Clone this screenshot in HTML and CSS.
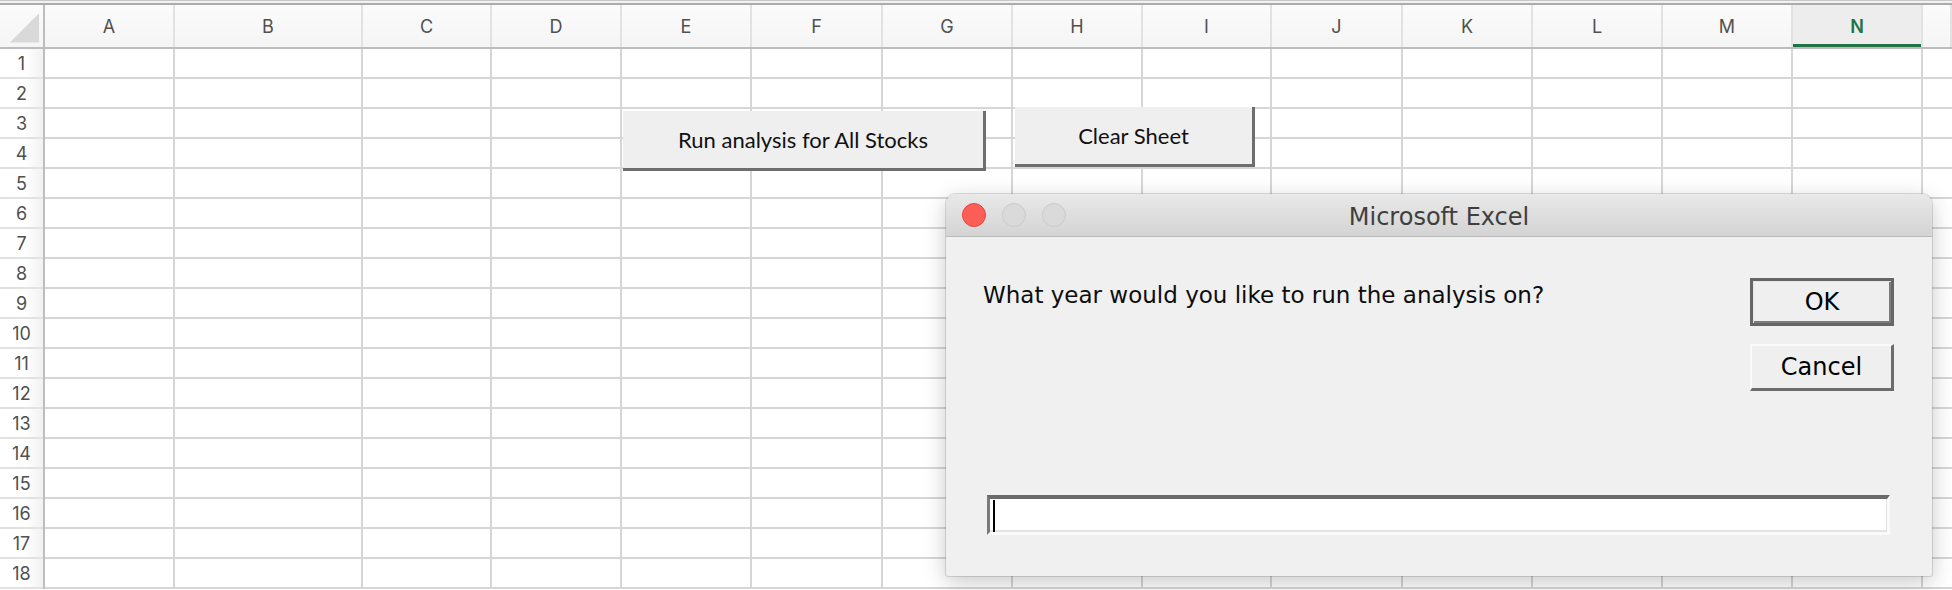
FILE: index.html
```html
<!DOCTYPE html>
<html lang="en">
<head>
<meta charset="utf-8">
<title>Microsoft Excel</title>
<link rel="stylesheet" href="styles.css">
</head>
<body>
<div class="app">
  <div class="topbar"></div>
  <div class="colhead">
    <div class="corner">
      <svg width="44" height="42" viewBox="0 0 44 42"><polygon points="40,8 40,38 10,38" fill="#d9d9d9"/></svg>
    </div>
    <div class="ch">A</div>
    <div class="ch">B</div>
    <div class="ch">C</div>
    <div class="ch">D</div>
    <div class="ch">E</div>
    <div class="ch">F</div>
    <div class="ch">G</div>
    <div class="ch">H</div>
    <div class="ch">I</div>
    <div class="ch">J</div>
    <div class="ch">K</div>
    <div class="ch">L</div>
    <div class="ch">M</div>
    <div class="ch sel">N</div>
    <div class="ch"></div>
  </div>
  <div class="sheet">
    <div class="rowhead">
      <div class="rh">1</div><div class="rh">2</div><div class="rh">3</div>
      <div class="rh">4</div><div class="rh">5</div><div class="rh">6</div>
      <div class="rh">7</div><div class="rh">8</div><div class="rh">9</div>
      <div class="rh">10</div><div class="rh">11</div><div class="rh">12</div>
      <div class="rh">13</div><div class="rh">14</div><div class="rh">15</div>
      <div class="rh">16</div><div class="rh">17</div><div class="rh">18</div>
    </div>
    <div class="col"></div><div class="col"></div><div class="col"></div>
    <div class="col"></div><div class="col"></div><div class="col"></div>
    <div class="col"></div><div class="col"></div><div class="col"></div>
    <div class="col"></div><div class="col"></div><div class="col"></div>
    <div class="col"></div><div class="col"></div><div class="col last"></div>
  </div>

  <button class="xl-btn run">Run analysis for All Stocks</button>
  <button class="xl-btn clear">Clear Sheet</button>

  <div class="dialog">
    <div class="titlebar">
      <div class="lights">
        <span class="light close"></span>
        <span class="light"></span>
        <span class="light"></span>
      </div>
      <div class="title">Microsoft Excel</div>
      <div></div>
    </div>
    <div class="dbody">
      <p class="prompt">What year would you like to run the analysis on?</p>
      <div class="actions">
        <button class="mbtn default">OK</button>
        <button class="mbtn">Cancel</button>
      </div>
      <div class="field"><span class="caret"></span></div>
    </div>
  </div>
</div>
</body>
</html>
```

FILE: styles.css
```css
* { box-sizing: border-box; }

html, body {
  margin: 0;
  padding: 0;
  background: #ffffff;
  overflow: hidden;
}

.app {
  position: relative;
  width: 1952px;
  height: 590px;
  font-family: "Inter", "Open Sans", "Liberation Sans", sans-serif;
}

.topbar {
  height: 5px;
  border-top: 1px solid #c8c8c8;
  border-bottom: 2px solid #ababab;
  background: #f2f2f2;
}

.colhead,
.sheet {
  display: grid;
  grid-template-columns: 45px 130px 188px 129px 130px 130px 131px 130px 130px 129px 131px 130px 130px 130px 130px 1fr;
}

.colhead {
  height: 44px;
  border-bottom: 2px solid #bdbdbd;
  background: linear-gradient(#fbfbfb, #f5f5f5);
}

.corner {
  border-right: 2px solid #bdbdbd;
  display: flex;
}

.ch {
  border-right: 2px solid #e2e2e2;
  display: flex;
  align-items: center;
  justify-content: center;
  font-size: 18px;
  color: #505050;
}

.ch.sel {
  background: #ededed;
  color: #217346;
  font-weight: 600;
  box-shadow: inset 0 -3px 0 #217346;
}

.sheet {
  height: 540px;
  background: repeating-linear-gradient(to bottom, transparent 0 28px, #d6d6d6 28px 30px);
}

.rowhead {
  border-right: 2px solid #bdbdbd;
  background: linear-gradient(to right, #ffffff 60%, #f1f1f1);
}

.rh {
  height: 30px;
  border-bottom: 2px solid #e2e2e2;
  display: flex;
  align-items: center;
  justify-content: center;
  font-size: 18px;
  color: #505050;
}

.col {
  border-right: 2px solid #d6d6d6;
}

.col.last {
  border-right: none;
}

/* Excel form buttons */
.xl-btn {
  position: absolute;
  height: 60px;
  padding: 0;
  margin: 0;
  border: none;
  border-right: 3px solid #6e6e6e;
  border-bottom: 3px solid #6e6e6e;
  background: #efefef;
  font-family: "Lato", "Carlito", sans-serif;
  font-size: 22px;
  color: #111111;
}

.xl-btn.run {
  left: 623px;
  top: 111px;
  width: 363px;
}

.xl-btn.clear {
  left: 1015px;
  top: 107px;
  width: 240px;
}

/* Dialog */
.dialog {
  position: absolute;
  left: 946px;
  top: 194px;
  width: 986px;
  height: 382px;
  background: #f0f0f0;
  border-radius: 10px 10px 2px 2px;
  box-shadow: 0 0 0 1px rgba(0, 0, 0, 0.12), 0 6px 22px rgba(0, 0, 0, 0.22);
  font-family: "DejaVu Sans", "Liberation Sans", sans-serif;
  display: flex;
  flex-direction: column;
}

.titlebar {
  height: 43px;
  flex: none;
  display: grid;
  grid-template-columns: 1fr auto 1fr;
  align-items: center;
  background: linear-gradient(#e9e9e9, #d4d4d4);
  border-bottom: 1px solid #b9b9b9;
  border-radius: 10px 10px 0 0;
}

.lights {
  display: flex;
  gap: 16px;
  padding-left: 16px;
}

.light {
  width: 24px;
  height: 24px;
  border-radius: 50%;
  background: #dadada;
  border: 1px solid #cbcbcb;
}

.light.close {
  background: #fd5f57;
  border-color: #e0463f;
}

.title {
  padding-top: 4px;
  font-size: 24px;
  color: #3f3f3f;
}

.dbody {
  flex: 1;
  display: grid;
  grid-template-columns: 1fr 144px;
  grid-template-rows: auto 1fr;
  padding: 41px 38px 41px 37px;
}

.prompt {
  margin: 0;
  padding-top: 4px;
  font-size: 23px;
  color: #0d0d0d;
}

.actions {
  display: flex;
  flex-direction: column;
  gap: 18px;
}

.mbtn {
  height: 47px;
  margin: 0;
  padding: 0;
  background: #efefef;
  border-style: solid;
  border-width: 2px 3px 3px 2px;
  border-color: #fafafa #6c6c6c #6c6c6c #fafafa;
  font-family: "DejaVu Sans", "Liberation Sans", sans-serif;
  font-size: 24px;
  color: #000000;
}

.mbtn.default {
  height: 48px;
  border: 3px solid #666666;
  box-shadow: inset 1px 1px 0 #e4e4e4, inset -2px -2px 0 #7c7c7c;
}

.field {
  grid-column: 1 / -1;
  align-self: end;
  height: 40px;
  margin: 0 4px;
  background: #ffffff;
  border-style: solid;
  border-width: 4px 3px 3px 3px;
  border-color: #6a6a6a #fafafa #fafafa #7a7a7a;
  box-shadow: inset 0 -2px 0 #e4e4e4, inset -1px 0 0 #e4e4e4;
  padding: 0 0 0 3px;
  display: flex;
  align-items: center;
}

.caret {
  width: 2px;
  height: 32px;
  background: #000000;
}
```
